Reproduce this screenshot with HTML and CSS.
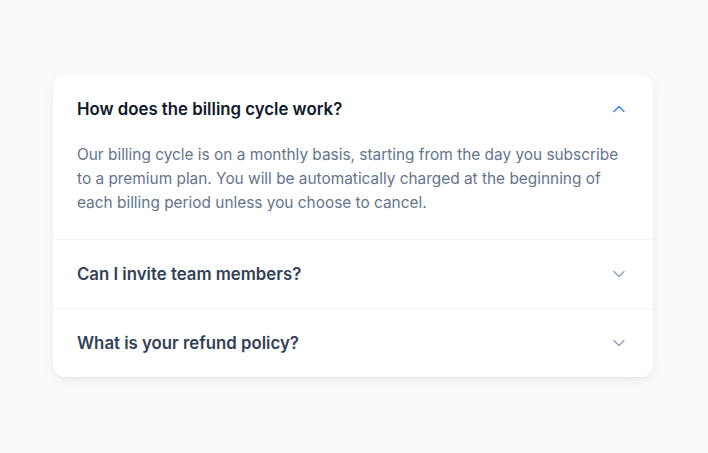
FILE: index.html
```html
<!DOCTYPE html>
<html>
<head>
<meta charset="utf-8">
<link rel="stylesheet" href="styles.css">
</head>
<body>
<div class="faq">
    <div class="item open">
        <div class="head">
            <span class="q">How does the billing cycle work?</span>
            <svg class="chev" viewBox="0 0 24 24"><path d="M6 15l6-6 6 6"/></svg>
        </div>
        <div class="answer">Our billing cycle is on a monthly basis, starting from the day you subscribe to a premium plan. You will be automatically charged at the beginning of each billing period unless you choose to cancel.</div>
    </div>
    <div class="item">
        <div class="head">
            <span class="q">Can I invite team members?</span>
            <svg class="chev" viewBox="0 0 24 24"><path d="M6 9l6 6 6-6"/></svg>
        </div>
    </div>
    <div class="item">
        <div class="head">
            <span class="q">What is your refund policy?</span>
            <svg class="chev" viewBox="0 0 24 24"><path d="M6 9l6 6 6-6"/></svg>
        </div>
    </div>
</div>
</body>
</html>
```

FILE: styles.css
```css
html, body {
  height: 100%;
}
body {
  margin: 0;
  background: #f8fafc;
  font-family: Inter, "Liberation Sans", sans-serif;
  display: flex;
  align-items: center;
  justify-content: center;
}

.faq {
  width: 600px;
  margin: -2px 2px 0 0;
  background: #ffffff;
  border-radius: 12px;
  box-shadow: 0 4px 12px rgba(15, 23, 42, 0.06), 0 1px 2px rgba(15, 23, 42, 0.04);
}

.item + .item {
  border-top: 1px solid #f1f5f9;
}

.head {
  display: flex;
  align-items: center;
  justify-content: space-between;
  padding: 22px 24px;
}

.q {
  font-size: 16.8px;
  line-height: 24px;
  font-weight: 600;
  color: #334155;
}
.open .q {
  color: #0f172a;
}

.chev {
  width: 20px;
  height: 20px;
  fill: none;
  stroke: #94a3b8;
  stroke-width: 1.8;
  stroke-linecap: round;
  stroke-linejoin: round;
}
.open .chev {
  stroke: #3b82f6;
}

.answer {
  padding: 0 24px 24px;
  font-size: 15.4px;
  line-height: 24px;
  color: #64748b;
}
```
